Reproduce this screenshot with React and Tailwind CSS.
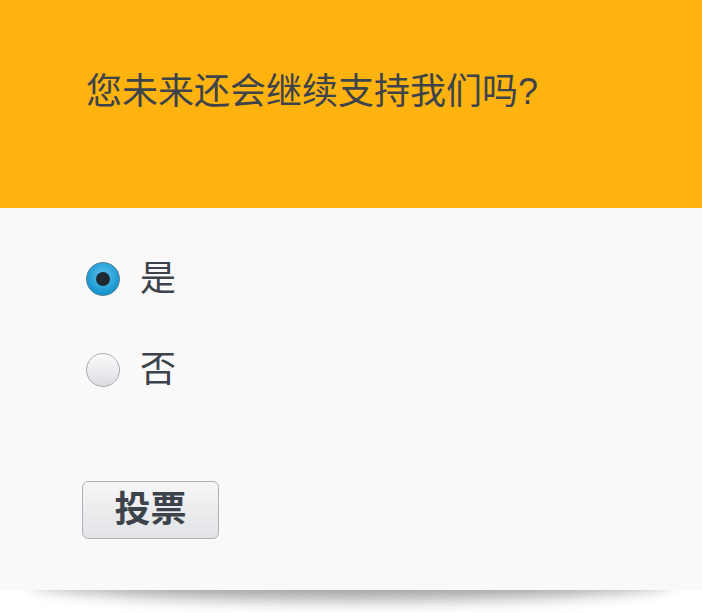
export default function App() {
  const options = [
    { label: '是', checked: true },
    { label: '否', checked: false },
  ];

  return (
    <div className="min-h-screen bg-white" style={{ fontFamily: '"Liberation Sans", "Noto Sans CJK SC", sans-serif' }}>
      <div className="relative isolate">
        {/* curved drop shadow under the card */}
        <div className="absolute bottom-[4px] left-[30px] right-[30px] -z-10 h-[40px] rounded-[50%] shadow-[0_14px_16px_rgba(0,0,0,0.36)]" />

        <div className="bg-[#ffb30f] h-[208px] pl-[86px] pt-[70px]">
          <h1 className="text-[36px] leading-[44px] text-[#3d434a]">您未来还会继续支持我们吗?</h1>
        </div>

        <div className="bg-[#f9f9f9] h-[382px] pt-[54px]">
          <div className="flex flex-col gap-[57px] pl-[86px]">
            {options.map((opt) => (
              <label key={opt.label} className="flex items-center gap-[20px] h-[34px]">
                {opt.checked ? (
                  <span className="flex h-[34px] w-[34px] items-center justify-center rounded-full border border-[#5d7d91] bg-[radial-gradient(circle_at_50%_40%,#5fc4ee,#1596cf_70%)]">
                    <span className="h-[14px] w-[14px] rounded-full bg-[#1f2a33]" />
                  </span>
                ) : (
                  <span className="h-[34px] w-[34px] rounded-full border border-[#a9adb3] bg-gradient-to-b from-[#fbfbfc] to-[#dcdde2]" />
                )}
                <span className="text-[36px] leading-none text-[#3d434a]">{opt.label}</span>
              </label>
            ))}
          </div>

          <div className="pl-[82px] pt-[94px]">
            <button className="h-[58px] w-[137px] rounded-[6px] border border-[#aeb2b8] bg-gradient-to-b from-[#f6f6f7] to-[#e2e3e6] text-[36px] font-bold leading-none text-[#3d434a]">
              投票
            </button>
          </div>
        </div>
      </div>
    </div>
  );
}
